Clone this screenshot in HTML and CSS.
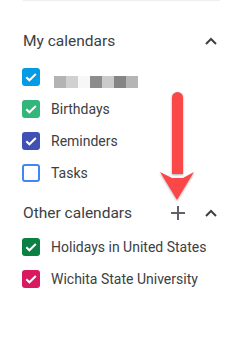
FILE: index.html
```html
<!DOCTYPE html>
<html>
<head>
<meta charset="utf-8">
<link rel="stylesheet" href="styles.css">
</head>
<body>
<div class="panel">
  <div class="divider"></div>

  <div class="header first">
    <span class="title">My calendars</span>
    <svg class="chev" width="12" height="8" viewBox="0 0 12 8"><path d="M1 7 L6 2 L11 7" fill="none" stroke="#3c4043" stroke-width="2"/></svg>
  </div>
  <div class="list">
    <div class="item">
      <span class="box blue"><svg viewBox="0 0 18 18" width="18" height="18"><path d="M4.3 9.3 L7.4 12.3 L13.8 6" fill="none" stroke="#fff" stroke-width="2"/></svg></span>
      <span class="blur"><i style="background:#b3b3b3"></i><i style="background:#d0d0d0"></i><i style="background:#f7f7f7"></i><i style="background:#8b8d8d"></i><i style="background:#cbcbcb"></i><i style="background:#858585"></i><i style="background:#b5b5b5"></i></span>
    </div>
    <div class="item">
      <span class="box green"><svg viewBox="0 0 18 18" width="18" height="18"><path d="M4.3 9.3 L7.4 12.3 L13.8 6" fill="none" stroke="#fff" stroke-width="2"/></svg></span>
      <span class="label">Birthdays</span>
    </div>
    <div class="item">
      <span class="box indigo"><svg viewBox="0 0 18 18" width="18" height="18"><path d="M4.3 9.3 L7.4 12.3 L13.8 6" fill="none" stroke="#fff" stroke-width="2"/></svg></span>
      <span class="label">Reminders</span>
    </div>
    <div class="item">
      <span class="box empty"></span>
      <span class="label">Tasks</span>
    </div>
  </div>

  <div class="header second">
    <span class="title">Other calendars</span>
    <svg class="plus" width="14" height="14" viewBox="0 0 14 14"><path d="M7 0 V14 M0 7 H14" fill="none" stroke="#5f6368" stroke-width="2"/></svg>
    <svg class="chev" width="12" height="8" viewBox="0 0 12 8"><path d="M1 7 L6 2 L11 7" fill="none" stroke="#3c4043" stroke-width="2"/></svg>
  </div>
  <div class="list">
    <div class="item">
      <span class="box dgreen"><svg viewBox="0 0 18 18" width="18" height="18"><path d="M4.3 9.3 L7.4 12.3 L13.8 6" fill="none" stroke="#fff" stroke-width="2"/></svg></span>
      <span class="label">Holidays in United States</span>
    </div>
    <div class="item">
      <span class="box pink"><svg viewBox="0 0 18 18" width="18" height="18"><path d="M4.3 9.3 L7.4 12.3 L13.8 6" fill="none" stroke="#fff" stroke-width="2"/></svg></span>
      <span class="label">Wichita State University</span>
    </div>
  </div>

  <svg class="arrow" width="44" height="118" viewBox="0 0 44 118">
    <defs>
      <filter id="sh" x="-30%" y="-10%" width="160%" height="130%">
        <feDropShadow dx="0" dy="1" stdDeviation="1" flood-color="#000" flood-opacity="0.35"/>
      </filter>
    </defs>
    <g filter="url(#sh)" fill="#fa4747">
      <path d="M14 9.5 A5.5 5.5 0 0 1 25 9.5 V86 H14 Z"/>
      <path d="M2 84 L14 90 L25 90 L36 84 L19 112 Z"/>
    </g>
  </svg>
</div>
</body>
</html>
```
FILE: styles.css
```css
html, body {
  margin: 0;
  padding: 0;
  background: #fff;
}
.panel {
  position: relative;
  width: 250px;
  height: 344px;
  font-family: Roboto, "Liberation Sans", sans-serif;
  color: #3c4043;
}
.divider {
  height: 1px;
  margin: 0 30px 0 23px;
  background: #eceff1;
}
.header {
  display: flex;
  align-items: center;
  height: 32px;
  padding: 0 33px 0 23px;
}
.header.first {
  margin-top: 24px;
}
.header.second {
  margin-top: 8px;
}
.title {
  flex: 1;
  font-size: 15.5px;
  line-height: 20px;
}
.plus {
  margin-right: 20px;
}
.list {
  margin-top: 4px;
}
.header.second + .list {
  margin-top: 2px;
}
.item {
  display: flex;
  align-items: center;
  height: 32px;
  padding-left: 22px;
}
.box {
  width: 18px;
  height: 18px;
  border-radius: 3px;
  box-sizing: border-box;
  flex: none;
}
.box svg {
  display: block;
}
.blue { background: #039be5; }
.green { background: #33b679; }
.indigo { background: #3f51b5; }
.dgreen { background: #0b8043; }
.pink { background: #d81b60; }
.empty {
  border: 2px solid #4285f4;
}
.label {
  margin-left: 11px;
  font-size: 14px;
  line-height: 20px;
}
.blur {
  display: flex;
  margin-left: 14px;
  margin-top: 10px;
}
.blur i {
  display: block;
  width: 12px;
  height: 12px;
}
.arrow {
  position: absolute;
  left: 158px;
  top: 88px;
}
```
